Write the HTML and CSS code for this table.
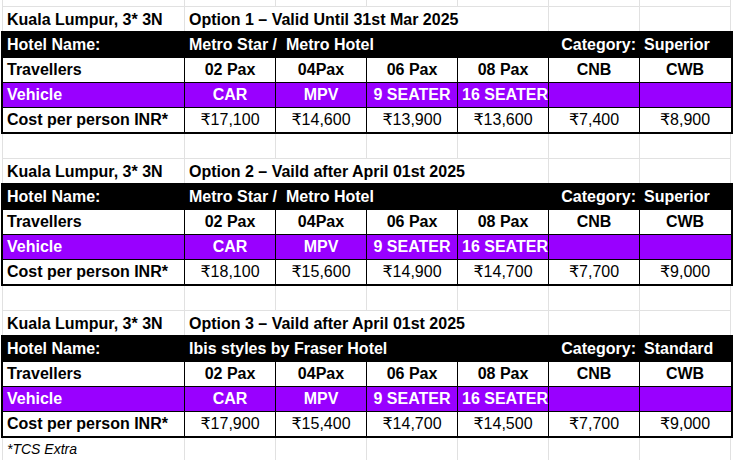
FILE: index.html
```html
<!DOCTYPE html>
<html>
<head>
<meta charset="utf-8">
<link rel="stylesheet" href="styles.css">
</head>
<body>
<div class="sheet">
  <div class="row top"><div class="c"></div><div class="c"></div><div class="c"></div><div class="c"></div><div class="c"></div><div class="c"></div><div class="c"></div></div>

  <div class="row title"><div class="c b">Kuala Lumpur, 3* 3N</div><div class="c b span4">Option 1 – Valid Until 31st Mar 2025</div><div class="c"></div><div class="c"></div></div>
  <div class="tbl">
    <div class="trow hdr"><div class="c b">Hotel Name:</div><div class="c b span4 pre">Metro Star /  Metro Hotel</div><div class="c b r">Category:</div><div class="c b">Superior</div></div>
    <div class="trow"><div class="c b">Travellers</div><div class="c b m">02 Pax</div><div class="c b m">04Pax</div><div class="c b m">06 Pax</div><div class="c b m">08 Pax</div><div class="c b m">CNB</div><div class="c b m">CWB</div></div>
    <div class="trow veh"><div class="c b">Vehicle</div><div class="c b m">CAR</div><div class="c b m">MPV</div><div class="c b m">9 SEATER</div><div class="c b m">16 SEATER</div><div class="c"></div><div class="c"></div></div>
    <div class="trow"><div class="c b">Cost per person INR*</div><div class="c m">₹17,100</div><div class="c m">₹14,600</div><div class="c m">₹13,900</div><div class="c m">₹13,600</div><div class="c m">₹7,400</div><div class="c m">₹8,900</div></div>
  </div>
  <div class="row empty"><div class="c"></div><div class="c"></div><div class="c"></div><div class="c"></div><div class="c"></div><div class="c"></div><div class="c"></div></div>

  <div class="row title"><div class="c b">Kuala Lumpur, 3* 3N</div><div class="c b span4">Option 2 – Vaild after April 01st 2025</div><div class="c"></div><div class="c"></div></div>
  <div class="tbl">
    <div class="trow hdr"><div class="c b">Hotel Name:</div><div class="c b span4 pre">Metro Star /  Metro Hotel</div><div class="c b r">Category:</div><div class="c b">Superior</div></div>
    <div class="trow"><div class="c b">Travellers</div><div class="c b m">02 Pax</div><div class="c b m">04Pax</div><div class="c b m">06 Pax</div><div class="c b m">08 Pax</div><div class="c b m">CNB</div><div class="c b m">CWB</div></div>
    <div class="trow veh"><div class="c b">Vehicle</div><div class="c b m">CAR</div><div class="c b m">MPV</div><div class="c b m">9 SEATER</div><div class="c b m">16 SEATER</div><div class="c"></div><div class="c"></div></div>
    <div class="trow"><div class="c b">Cost per person INR*</div><div class="c m">₹18,100</div><div class="c m">₹15,600</div><div class="c m">₹14,900</div><div class="c m">₹14,700</div><div class="c m">₹7,700</div><div class="c m">₹9,000</div></div>
  </div>
  <div class="row empty"><div class="c"></div><div class="c"></div><div class="c"></div><div class="c"></div><div class="c"></div><div class="c"></div><div class="c"></div></div>

  <div class="row title"><div class="c b">Kuala Lumpur, 3* 3N</div><div class="c b span4">Option 3 – Vaild after April 01st 2025</div><div class="c"></div><div class="c"></div></div>
  <div class="tbl">
    <div class="trow hdr"><div class="c b">Hotel Name:</div><div class="c b span4">Ibis styles by Fraser Hotel</div><div class="c b r">Category:</div><div class="c b">Standard</div></div>
    <div class="trow"><div class="c b">Travellers</div><div class="c b m">02 Pax</div><div class="c b m">04Pax</div><div class="c b m">06 Pax</div><div class="c b m">08 Pax</div><div class="c b m">CNB</div><div class="c b m">CWB</div></div>
    <div class="trow veh"><div class="c b">Vehicle</div><div class="c b m">CAR</div><div class="c b m">MPV</div><div class="c b m">9 SEATER</div><div class="c b m">16 SEATER</div><div class="c"></div><div class="c"></div></div>
    <div class="trow"><div class="c b">Cost per person INR*</div><div class="c m">₹17,900</div><div class="c m">₹15,400</div><div class="c m">₹14,700</div><div class="c m">₹14,500</div><div class="c m">₹7,700</div><div class="c m">₹9,000</div></div>
  </div>
  <div class="row foot"><div class="c note">*TCS Extra</div><div class="c"></div><div class="c"></div><div class="c"></div><div class="c"></div><div class="c"></div><div class="c"></div></div>
</div>
</body>
</html>
```

FILE: styles.css
```css
* { box-sizing: border-box; }
html, body { margin: 0; padding: 0; background: #fff; }
body {
  font-family: "Liberation Sans", Arial, "DejaVu Sans", sans-serif;
  font-size: 16px;
  color: #000;
  width: 734px;
  height: 460px;
  overflow: hidden;
}
.sheet { display: flex; flex-direction: column; }

.row, .trow {
  display: grid;
  grid-template-columns: 182px repeat(6, 91px);
}
.row {
  margin-left: 2px;
  border-left: 1px solid #e1e1e1;
  width: 729px;
}
.row .c { border-right: 1px solid #e1e1e1; }
.row.top { height: 7px; border-bottom: 1px solid #e1e1e1; }
.row.title { height: 24px; }
.row.title .c { padding-top: 1px; line-height: 23px; }
.row.empty { height: 25px; border-bottom: 1px solid #e1e1e1; }
.row.foot { height: 24px; }

.c {
  line-height: 24px;
  padding: 0 4px;
  white-space: nowrap;
  overflow: visible;
  min-width: 0;
}
.span4 { grid-column: span 4; }
.b { font-weight: bold; }
.m { text-align: center; }
.r { text-align: right; padding-right: 3px; }
.pre { white-space: pre; }

.tbl {
  margin-left: 1px;
  width: 732px;
  border: 2px solid #000;
}
.trow { height: 25px; border-top: 1px solid #000; grid-template-columns: 182px repeat(5, 91px) 90px; }
.trow:first-child { height: 24px; border-top: 0; }
.trow .c { border-right: 1px solid #000; }
.trow .c:last-child { border-right: 0; }
.hdr { background: #000; color: #fff; }
.veh { background: #9900ff; color: #fff; }

.note {
  font-style: italic;
  font-size: 14px;
  line-height: 22px;
}
```
